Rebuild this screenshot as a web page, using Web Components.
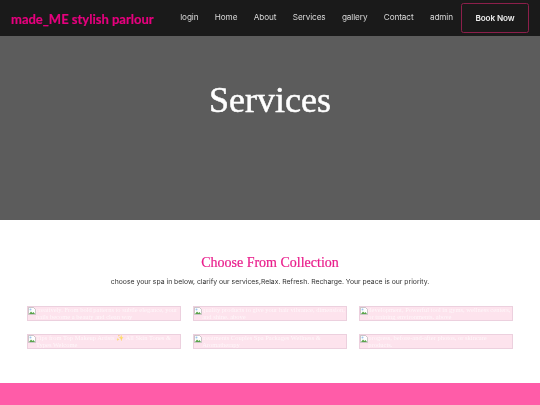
<!DOCTYPE html>
<html lang="en">
<head>
<meta charset="utf-8">
<title>Services</title>
<style>
  html, body { margin: 0; padding: 0; background: #fff; }
  body { width: 540px; height: 405px; overflow: hidden; font-family: Inter, "Liberation Sans", sans-serif; filter: blur(.3px); }
</style>
</head>
<body>
<site-header></site-header>
<page-hero>Services</page-hero>
<service-section heading="Choose From Collection" intro="choose your spa in below, clarify our services,Relax. Refresh. Recharge. Your peace is our priority.">
  <service-card>creatively. From bold patterns to subtle elegance, your nails become a beauty and clean way</service-card>
  <service-card>quality products to give your hair vibrance, dimension, and shine. above</service-card>
  <service-card>development, Powerful tool in gyms, wellness centers, or training environments. above</service-card>
  <service-card>Tips from Top Makeup Artists ✨ All Skin Tones &amp; Types Welcome</service-card>
  <service-card>treatments Couples Spa Packages Wellness &amp; Aromatherapy</service-card>
  <service-card>progress, before-and-after photos, or skincare products.</service-card>
</service-section>
<site-footer></site-footer>

<script>
class SiteHeader extends HTMLElement {
  constructor() {
    super();
    this.attachShadow({ mode: 'open' });
    const links = ['login', 'Home', 'About', 'Services', 'gallery', 'Contact', 'admin'];
    this.shadowRoot.innerHTML = `
    <style>
      :host { display: flex; align-items: center; justify-content: space-between; height: 36px; background: #1a1a1a; padding: 0 11px; box-sizing: border-box; }
      .logo { font: bold 13px Lato, "Liberation Sans", sans-serif; color: #e6007e; white-space: nowrap; margin-top: 1px; -webkit-text-stroke: .2px #e6007e; }
      nav { display: flex; align-items: center; gap: 16.4px; }
      a { font: 8.2px Inter, sans-serif; color: #d8d8d8; text-decoration: none; margin-top: -2px; letter-spacing: -.1px; }
      .book { font: 600 8.2px Inter, sans-serif; color: #eee; border: 1.5px solid #8c1f4b; border-radius: 2.5px; width: 68px; height: 30px; display: flex; align-items: center; justify-content: center; box-sizing: border-box; margin: 0 0 0 -8.4px; }
    </style>
    <span class="logo">made_ME stylish parlour</span>
    <nav>
      ${links.map(l => `<a href="#">${l}</a>`).join('')}
      <a class="book" href="#">Book Now</a>
    </nav>`;
  }
}

class PageHero extends HTMLElement {
  constructor() {
    super();
    this.attachShadow({ mode: 'open' });
    this.shadowRoot.innerHTML = `
    <style>
      :host { display: block; height: 184px; background: #5c5c5c; text-align: center; }
      h1 { margin: 0; padding-top: 43px; font: 500 36px/42px "Liberation Serif", serif; color: #fff; -webkit-text-stroke: .5px #fff; }
    </style>
    <h1><slot></slot></h1>`;
  }
}

class ServiceSection extends HTMLElement {
  constructor() {
    super();
    this.attachShadow({ mode: 'open' });
    this.shadowRoot.innerHTML = `
    <style>
      :host { display: block; height: 163px; box-sizing: border-box; padding-top: 34px; text-align: center; }
      h2 { margin: 0; font: 500 14px/18px "Liberation Serif", serif; color: #e91e8c; -webkit-text-stroke: .2px #e91e8c; }
      p { margin: 4px 0 0; font: 6.85px/12px Inter, sans-serif; color: #333; }
      .grid { display: grid; grid-template-columns: repeat(3, 1fr); column-gap: 12.5px; row-gap: 13px; margin: 18px 27px 0; }
    </style>
    <h2>${this.getAttribute('heading')}</h2>
    <p>${this.getAttribute('intro')}</p>
    <div class="grid"><slot></slot></div>`;
  }
}

class ServiceCard extends HTMLElement {
  constructor() {
    super();
    this.attachShadow({ mode: 'open' });
    this.shadowRoot.innerHTML = `
    <style>
      :host { display: block; height: 15px; overflow: hidden; background: #fde3ed; border: 1px solid #ecd0de; box-sizing: border-box; text-align: left; }
      .text { font: 6.5px/6.5px "Liberation Serif", serif; color: rgba(255,255,255,.7); display: block; }
      svg { float: left; width: 8px; height: 8px; }
    </style>
    <div class="text"><svg viewBox="0 0 16 16"><path d="M1 1h10l4 4v10H1z" fill="#fff" stroke="#9a9a9a"/><path d="M2 14l4-5 3 3 2-2 3 4z" fill="#5aa34a"/><circle cx="5" cy="5" r="2" fill="#9cc4ee"/></svg><slot></slot></div>`;
  }
}

class SiteFooter extends HTMLElement {
  constructor() {
    super();
    this.attachShadow({ mode: 'open' });
    this.shadowRoot.innerHTML = `
    <style>
      :host { display: block; height: 23px; background: #ff5ca8; }
    </style>`;
  }
}

customElements.define('site-header', SiteHeader);
customElements.define('page-hero', PageHero);
customElements.define('service-section', ServiceSection);
customElements.define('service-card', ServiceCard);
customElements.define('site-footer', SiteFooter);
</script>
</body>
</html>
